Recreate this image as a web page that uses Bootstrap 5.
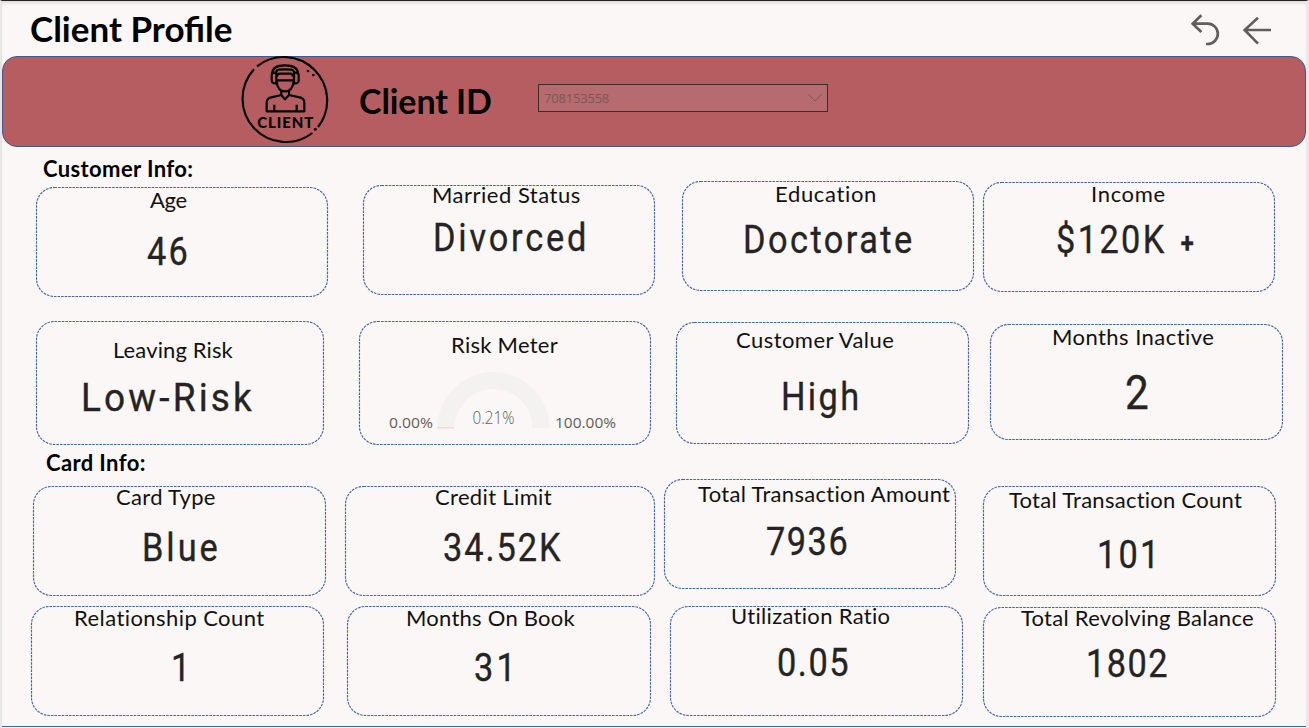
<!DOCTYPE html>
<html lang="en">
<head>
<meta charset="utf-8">
<meta name="viewport" content="width=device-width, initial-scale=1">
<title>Client Profile</title>
<link rel="stylesheet" href="https://cdn.jsdelivr.net/npm/bootstrap@5.3.0/dist/css/bootstrap.min.css">
<style>
body{background:#fbf7f6;color:#000;font-family:Lato,"Liberation Sans",sans-serif;width:1309px;height:728px;overflow:hidden}
.page{width:1309px;height:728px;border-top:1px solid #252423;border-left:2px solid #e6e6e6;border-right:3px solid #e8e9ea;box-shadow:inset 0 4px 4px -3px #cfcccc}
.topbar{height:55px;padding:7px 35px 0 28px}
.topbar h1{font-size:35px;line-height:40px;font-weight:700;letter-spacing:0;margin:0}
.nav-icons{width:80px;height:33px;margin:5px 0 0}
.banner{height:91px;background:#b65d62;border:1px solid #3f5a94;border-radius:15px;padding-left:232px}
.logo{width:100px;height:100px;margin-top:-7px}
.banner h2{font-size:34px;line-height:41px;font-weight:700;letter-spacing:-.08px;margin:23px 0 0 24px;width:179px}
.picker{width:290px;height:28px;margin-top:27px;border:1px solid #3a2c2e;border-radius:0;background:#b56b70;color:#7a5857;font:13px/27px "Open Sans",sans-serif;padding:0 5px;letter-spacing:-.2px}
.section-title{height:34px;padding:9px 0 0 41px;font-size:22px;line-height:25px;font-weight:700;letter-spacing:.38px;margin:0}
.section-title.second{padding:5px 0 0 44px}
.tiles{height:var(--rh)}
.tile{position:relative;flex:none;width:var(--w,293px);height:var(--h,110px);margin:var(--mt,0) 0 0 var(--ml)}
.outline{position:absolute;inset:0;width:100%;height:100%;overflow:visible;pointer-events:none}
.outline rect{x:.5px;y:.5px;width:calc(100% - 1px);height:calc(100% - 1px);rx:18px;fill:none;stroke:#4467a8;stroke-width:1.15;stroke-dasharray:2.6 1}
.label{font-size:22px;line-height:21px;white-space:nowrap;color:#111;margin:var(--lt) 0 0 var(--lx);letter-spacing:var(--ls)}
.value{font:400 39px/46px Roboto,sans-serif;white-space:nowrap;color:#252423;margin:var(--vt) 0 0 var(--vx);letter-spacing:var(--vs);transform:translateY(1px) scaleX(var(--k,.88));transform-origin:0 0;-webkit-text-stroke:.35px #252423}
.value .plus{font-size:27px;font-weight:700;margin-left:16px}
.gauge{width:240px;height:62px;margin:15px 0 0 26px;font-family:"Open Sans",sans-serif;fill:#605e5c}
.footline{height:1px;background:#3f63a3;margin-top:9px}

.age{--w:292px;--ml:34px;--mt:6px;--lt:2px;--lx:114px;--ls:-.3px;--vt:18px;--vx:111.1px;--vs:2.4px}
.married{--w:292px;--ml:35px;--mt:4px;--lt:-1px;--lx:69px;--ls:.5px;--vt:9px;--vx:70px;--vs:3.2px}
.education{--w:292px;--ml:27px;--lt:2px;--lx:93px;--ls:.67px;--vt:12px;--vx:61px;--vs:2.79px}
.income{--w:292px;--ml:9px;--mt:1px;--lt:1px;--lx:108px;--ls:.68px;--vt:12px;--vx:73.2px;--vs:2.73px}
.leaving{--w:288px;--h:124px;--ml:34px;--lt:18px;--lx:77px;--ls:.12px;--vt:14px;--vx:45.4px;--vs:3.3px;--k:.95}
.meter{--w:292px;--h:124px;--ml:35px;--lt:13px;--lx:92px;--ls:.26px}
.worth{--h:122px;--ml:25px;--mt:1px;--lt:7px;--lx:60px;--ls:.45px;--vt:23px;--vx:105.4px;--vs:2.7px}
.inactive{--h:116px;--ml:21px;--mt:3px;--lt:2px;--lx:62px;--ls:.45px;--vt:16px;--vx:135.2px}
.inactive .value{font-size:48px;line-height:57px}
.cardtype{--ml:31px;--mt:7px;--lt:0px;--lx:83px;--ls:.32px;--vt:17px;--vx:109px;--vs:3.4px}
.credit{--w:310px;--ml:19px;--mt:7px;--lt:0px;--lx:90px;--ls:.35px;--vt:17px;--vx:98.1px;--vs:2.2px}
.amount{--w:292px;--ml:9px;--lt:4px;--lx:34px;--ls:.32px;--vt:14px;--vx:101.5px;--vs:1.72px}
.txcount{--ml:27px;--mt:7px;--lt:3px;--lx:26px;--ls:.27px;--vt:21px;--vx:114.4px;--vs:2.5px}
.relation{--ml:29px;--lt:1px;--lx:43px;--ls:.43px;--vt:16px;--vx:140.400px}
.book{--w:304px;--ml:23px;--lt:1px;--lx:59px;--ls:.25px;--vt:16px;--vx:127.1px;--vs:3.72px}
.utilization{--ml:19px;--lt:-1px;--lx:61px;--ls:.32px;--vt:13px;--vx:106.8px;--vs:1.76px}
.revolving{--ml:20px;--mt:1px;--lt:0px;--lx:38px;--ls:.27px;--vt:12px;--vx:103.4px;--vs:1.63px}
.rows-a{--rh:140px}.rows-b{--rh:124px}.rows-c{--rh:127px}.rows-d{--rh:111px}
</style>
</head>
<body>
<main class="page d-flex flex-column">
  <header class="topbar d-flex justify-content-between align-items-start flex-shrink-0">
    <h1>Client Profile</h1>
    <svg class="nav-icons" viewBox="0 0 240 99" fill="none" stroke="#605e5c" stroke-width="8">
      <path d="M31 7 5 32l26 25M7 32h43a30 30 0 0 1 0 61h-5"/>
      <path d="M201 14 161 51l40 41M162 51h81"/>
    </svg>
  </header>

  <section class="banner d-flex align-items-start flex-shrink-0">
    <svg class="logo flex-shrink-0" viewBox="0 0 300 300" fill="none" stroke="#000" stroke-width="6.500">
      <path d="M66 49A130 130 0 0 1 249 231M232 249A130 130 0 0 1 57 58"/>
      <g stroke-width="6.500" stroke-linejoin="round">
        <path d="M112 69C112 52 128 46 150 46s38 6 39 23M123 66c2-8 10-8 27-8s25 0 27 8"/>
        <path d="M124 68h-5q-9 0-9 8v15q0 9 9 9h5zM177 68h5q9 0 9 8v15q0 9-9 9h-5z"/>
        <path d="M125 91h51M125 94q2 30 25 30t26-30M126 80q0-9 9-9h30q9 0 9 9"/>
        <path d="M139 121v14l-30 7q-14 3-14 16v26h113v-26q0-13-14-16l-32-7v-14M139 135l11 13 12-13M118 164v20M185 164v20"/>
      </g>
      <g fill="#000" stroke="none"><circle cx="219" cy="63" r="4"/><circle cx="235" cy="75" r="4"/><circle cx="241" cy="238" r="4.5"/>
      <text x="67" y="235" font-family="Lato, sans-serif" font-weight="900" font-size="45" textLength="168">CLIENT</text></g>
    </svg>
    <h2>Client ID</h2>
    <div class="picker d-flex justify-content-between align-items-center" role="combobox">
      <span>708153558</span>
      <svg width="14" height="8" viewBox="0 0 14 8" fill="none" stroke="#7a5857"><path d="m.5.5 6.500 6.500 6.500-6.500"/></svg>
    </div>
  </section>

  <h3 class="section-title flex-shrink-0">Customer Info:</h3>
  <div class="tiles rows-a d-flex align-items-start flex-shrink-0">
    <div class="tile age d-flex flex-column align-items-start"><svg class="outline"><rect/></svg><div class="label">Age</div><div class="value">46</div></div>
    <div class="tile married d-flex flex-column align-items-start"><svg class="outline"><rect/></svg><div class="label">Married Status</div><div class="value">Divorced</div></div>
    <div class="tile education d-flex flex-column align-items-start"><svg class="outline"><rect/></svg><div class="label">Education</div><div class="value">Doctorate</div></div>
    <div class="tile income d-flex flex-column align-items-start"><svg class="outline"><rect/></svg><div class="label">Income</div><div class="value">$120K<span class="plus">+</span></div></div>
  </div>
  <div class="tiles rows-b d-flex align-items-start flex-shrink-0">
    <div class="tile leaving d-flex flex-column align-items-start"><svg class="outline"><rect/></svg><div class="label">Leaving Risk</div><div class="value">Low-Risk</div></div>
    <div class="tile meter d-flex flex-column align-items-start"><svg class="outline"><rect/></svg><div class="label">Risk Meter</div>
      <svg class="gauge" viewBox="0 0 240 62">
        <path d="M52.500 58a56 56 0 0 1 112 0h-17a39 39 0 0 0-78 0z" fill="#f3f2f1"/>
        <path d="M52 57h17v1.500H52z" fill="#f6d5d5"/>
        <text x="4" y="58" font-size="14.500" textLength="44" lengthAdjust="spacingAndGlyphs">0.00%</text>
        <text x="87.500" y="54" font-size="18" font-weight="300" textLength="42" lengthAdjust="spacingAndGlyphs">0.21%</text>
        <text x="170" y="58" font-size="14.500" textLength="61" lengthAdjust="spacingAndGlyphs">100.00%</text>
      </svg>
    </div>
    <div class="tile worth d-flex flex-column align-items-start"><svg class="outline"><rect/></svg><div class="label">Customer Value</div><div class="value">High</div></div>
    <div class="tile inactive d-flex flex-column align-items-start"><svg class="outline"><rect/></svg><div class="label">Months Inactive</div><div class="value">2</div></div>
  </div>

  <h3 class="section-title second flex-shrink-0">Card Info:</h3>
  <div class="tiles rows-c d-flex align-items-start flex-shrink-0">
    <div class="tile cardtype d-flex flex-column align-items-start"><svg class="outline"><rect/></svg><div class="label">Card Type</div><div class="value">Blue</div></div>
    <div class="tile credit d-flex flex-column align-items-start"><svg class="outline"><rect/></svg><div class="label">Credit Limit</div><div class="value">34.52K</div></div>
    <div class="tile amount d-flex flex-column align-items-start"><svg class="outline"><rect/></svg><div class="label">Total Transaction Amount</div><div class="value">7936</div></div>
    <div class="tile txcount d-flex flex-column align-items-start"><svg class="outline"><rect/></svg><div class="label">Total Transaction Count</div><div class="value">101</div></div>
  </div>
  <div class="tiles rows-d d-flex align-items-start flex-shrink-0">
    <div class="tile relation d-flex flex-column align-items-start"><svg class="outline"><rect/></svg><div class="label">Relationship Count</div><div class="value">1</div></div>
    <div class="tile book d-flex flex-column align-items-start"><svg class="outline"><rect/></svg><div class="label">Months On Book</div><div class="value">31</div></div>
    <div class="tile utilization d-flex flex-column align-items-start"><svg class="outline"><rect/></svg><div class="label">Utilization Ratio</div><div class="value">0.05</div></div>
    <div class="tile revolving d-flex flex-column align-items-start"><svg class="outline"><rect/></svg><div class="label">Total Revolving Balance</div><div class="value">1802</div></div>
  </div>
  <div class="footline flex-shrink-0"></div>
</main>
<script src="https://cdn.jsdelivr.net/npm/bootstrap@5.3.0/dist/js/bootstrap.bundle.min.js"></script>
</body>
</html>
